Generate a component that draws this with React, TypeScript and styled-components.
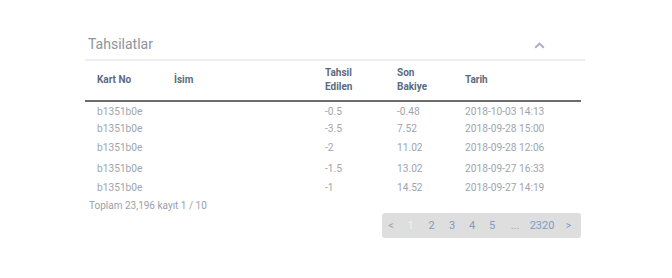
import styled, {createGlobalStyle} from 'styled-components';

const GlobalStyle = createGlobalStyle`
  html, body {
    margin: 0;
    padding: 0;
    background: #fff;
    font-family: Roboto, "Liberation Sans", sans-serif;
  }
`

const Panel = styled.section`
  width: 500px;
  margin: 0 0 0 85px;
  padding-top: 29px;
`

const PanelHeader = styled.div`
  display: flex;
  align-items: center;
  justify-content: space-between;
  height: 30px;
  padding: 0 40px 0 3px;
  border-bottom: 2px solid #eceef3;
`

const Title = styled.h2`
  margin: 0;
  font-size: 14px;
  font-weight: 400;
  color: #8d949d;
`

const Chevron = styled.svg`
  width: 11px;
  height: 7px;
  margin-top: 2px;
`

const Table = styled.table`
  width: 496px;
  table-layout: fixed;
  border-collapse: collapse;
  font-size: 10.2px;
  margin-top: 0;
`

const HeadCell = styled.th<{w: number; first?: boolean}>`
  box-sizing: border-box;
  width: ${({w}) => w}px;
  text-align: left;
  font-weight: 700;
  font-size: 10px;
  color: #5b6a80;
  line-height: 14px;
  padding: 5px 0 6px ${({first}) => first ? 12 : 0}px;
  vertical-align: middle;
  border-bottom: 2px solid #6b6b6b;
`

const Row = styled.tr<{h: number}>`
  height: ${({h}) => h}px;
`

const Cell = styled.td<{first?: boolean}>`
  color: #a0a5ac;
  padding: 0 0 0 ${({first}) => first ? 12 : 0}px;
  vertical-align: middle;
  white-space: nowrap;
`

const Footer = styled.div`
  font-size: 10px;
  color: #9aa0a8;
  padding: 3px 0 0 4px;
`

const PagerWrap = styled.div`
  display: flex;
  justify-content: flex-end;
  padding: 2px 4px 0 0;
`

const Pager = styled.nav`
  display: flex;
  align-items: center;
  width: 199px;
  height: 25px;
  background: #dedede;
  border-radius: 3px;
`

const PageItem = styled.span<{tone: 'link' | 'active' | 'muted'; w: number}>`
  width: ${({w}) => w}px;
  text-align: center;
  font-size: 11px;
  color: ${({tone}) => tone === 'active' ? '#f2f2f2' : tone === 'muted' ? '#a3a9b2' : '#7b9cc6'};
`

const rows = [
  {tahsil: '-0.5', bakiye: '-0.48', tarih: '2018-10-03 14:13', h: 19},
  {tahsil: '-3.5', bakiye: '7.52', tarih: '2018-09-28 15:00', h: 17},
  {tahsil: '-2', bakiye: '11.02', tarih: '2018-09-28 12:06', h: 21},
  {tahsil: '-1.5', bakiye: '13.02', tarih: '2018-09-27 16:33', h: 20},
  {tahsil: '-1', bakiye: '14.52', tarih: '2018-09-27 14:19', h: 19},
]

const pages: {label: string; tone: 'link' | 'active' | 'muted'; w: number}[] = [
  {label: '<', tone: 'muted', w: 18},
  {label: '1', tone: 'active', w: 21},
  {label: '2', tone: 'link', w: 21},
  {label: '3', tone: 'link', w: 20},
  {label: '4', tone: 'link', w: 20},
  {label: '5', tone: 'link', w: 20},
  {label: '...', tone: 'muted', w: 26},
  {label: '2320', tone: 'link', w: 28},
  {label: '>', tone: 'link', w: 25},
]

export default function App() {
  return <>
    <GlobalStyle/>
    <Panel>
      <PanelHeader>
        <Title>Tahsilatlar</Title>
        <Chevron viewBox="0 0 11 7">
          <path d="M1.2 5.8 L5.5 1.6 L9.8 5.8" fill="none" stroke="#aab0ba" strokeWidth="2"/>
        </Chevron>
      </PanelHeader>
      <Table>
        <thead>
          <tr>
            <HeadCell w={89} first>Kart No</HeadCell>
            <HeadCell w={151}>İsim</HeadCell>
            <HeadCell w={72}>Tahsil<br/>Edilen</HeadCell>
            <HeadCell w={68}>Son<br/>Bakiye</HeadCell>
            <HeadCell w={116}>Tarih</HeadCell>
          </tr>
        </thead>
        <tbody>
          {rows.map((r, i) => <Row key={i} h={r.h}>
            <Cell first>b1351b0e</Cell>
            <Cell></Cell>
            <Cell>{r.tahsil}</Cell>
            <Cell>{r.bakiye}</Cell>
            <Cell>{r.tarih}</Cell>
          </Row>)}
        </tbody>
      </Table>
      <Footer>Toplam 23,196 kayıt 1 / 10</Footer>
      <PagerWrap>
        <Pager>
          {pages.map((p, i) => <PageItem key={i} tone={p.tone} w={p.w}>{p.label}</PageItem>)}
        </Pager>
      </PagerWrap>
    </Panel>
  </>
}
